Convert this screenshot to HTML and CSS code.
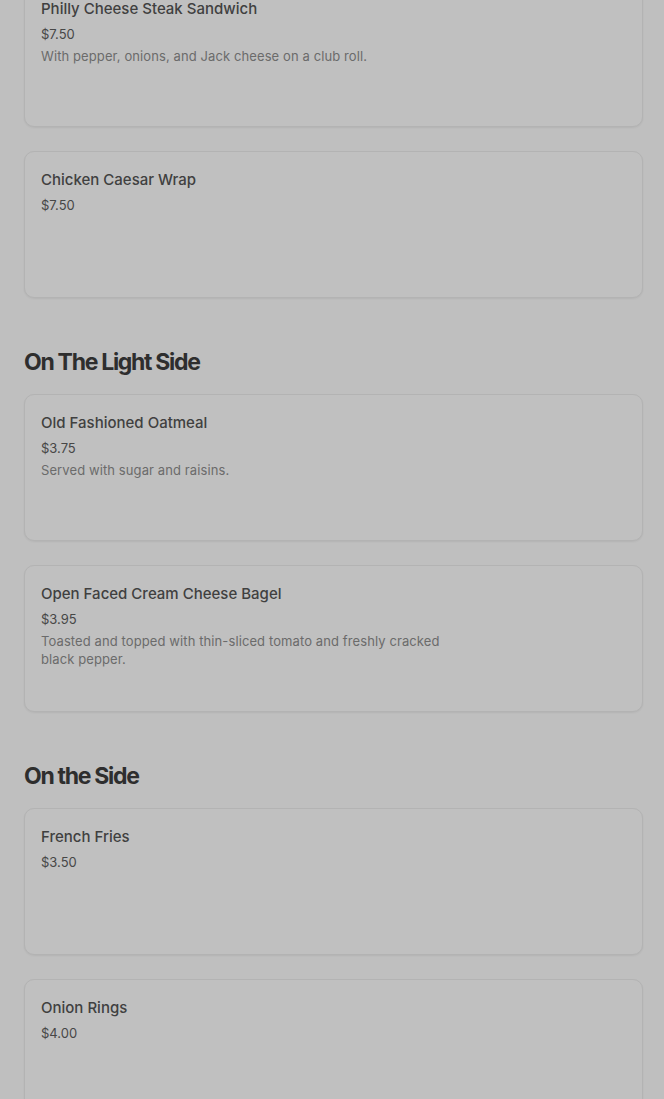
FILE: index.html
```html
<!DOCTYPE html>
<html lang="en">
<head>
<meta charset="utf-8">
<title>Menu</title>
<link rel="stylesheet" href="styles.css">
</head>
<body>
<main class="menu">
  <section class="section first">
    <div class="cards">
      <article class="card">
        <h3 class="item-name">Philly Cheese Steak Sandwich</h3>
        <p class="item-price">$7.50</p>
        <p class="item-desc">With pepper, onions, and Jack cheese on a club roll.</p>
      </article>
      <article class="card">
        <h3 class="item-name">Chicken Caesar Wrap</h3>
        <p class="item-price">$7.50</p>
      </article>
    </div>
  </section>
  <section class="section">
    <h2 class="section-title">On The Light Side</h2>
    <div class="cards">
      <article class="card">
        <h3 class="item-name">Old Fashioned Oatmeal</h3>
        <p class="item-price">$3.75</p>
        <p class="item-desc">Served with sugar and raisins.</p>
      </article>
      <article class="card">
        <h3 class="item-name">Open Faced Cream Cheese Bagel</h3>
        <p class="item-price">$3.95</p>
        <p class="item-desc">Toasted and topped with thin-sliced tomato and freshly cracked black pepper.</p>
      </article>
    </div>
  </section>
  <section class="section">
    <h2 class="section-title">On the Side</h2>
    <div class="cards">
      <article class="card">
        <h3 class="item-name">French Fries</h3>
        <p class="item-price">$3.50</p>
      </article>
      <article class="card">
        <h3 class="item-name">Onion Rings</h3>
        <p class="item-price">$4.00</p>
      </article>
    </div>
  </section>
</main>
</body>
</html>
```
FILE: styles.css
```css
html, body {
  margin: 0;
  padding: 0;
  background: #bfbfbf;
}
body {
  font-family: Inter, "Noto Sans", sans-serif;
  color: #333;
  overflow: hidden;
  height: 1099px;
}
.menu {
  margin-top: -20px;
  padding: 0 21px 0 24px;
}
.section {
  margin-top: 48px;
}
.section.first {
  margin-top: 0;
}
.section-title {
  margin: 0 0 16px;
  font-size: 23px;
  line-height: 32px;
  font-weight: 700;
  letter-spacing: -1.3px;
  color: #2e2e2e;
}
.cards {
  display: flex;
  flex-direction: column;
  gap: 24px;
}
.card {
  box-sizing: border-box;
  min-height: 147px;
  padding: 16px 16px 14px;
  border: 1px solid #b3b3b3;
  border-radius: 10px;
  background: #c0c0c0;
  box-shadow: 0 1px 2px rgba(0,0,0,0.06);
}
.item-name {
  margin: 0;
  font-size: 15px;
  line-height: 24px;
  font-weight: 500;
  color: #404040;
}
.item-price {
  margin: 3px 0 0;
  font-size: 13px;
  line-height: 20px;
  color: #474747;
}
.item-desc {
  margin: 3px 0 0;
  max-width: 420px;
  font-size: 13px;
  line-height: 18px;
  letter-spacing: 0.1px;
  color: #6b6b6b;
}
```
